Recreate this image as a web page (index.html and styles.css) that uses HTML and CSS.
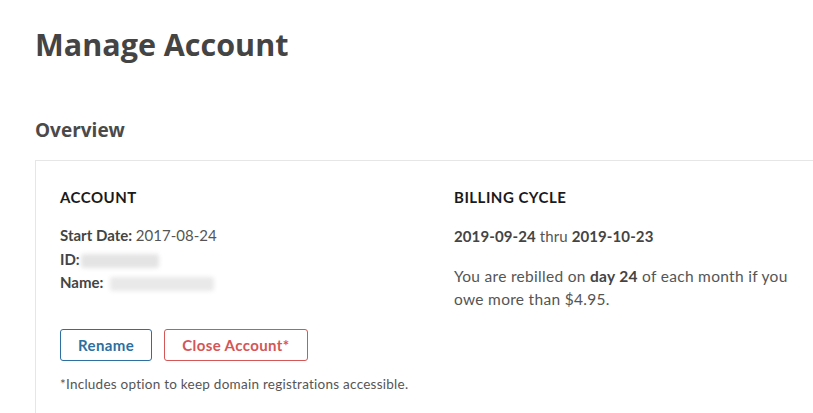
FILE: index.html
```html
<!DOCTYPE html>
<html lang="en">
<head>
  <meta charset="UTF-8">
  <title>Manage Account</title>
  <link rel="stylesheet" href="styles.css">
</head>
<body>
  <div class="page">
    <h1>Manage Account</h1>
    <h2>Overview</h2>

    <div class="card">
      <div class="col account">
        <h3>ACCOUNT</h3>
        <ul class="details">
          <li><strong>Start Date:</strong> 2017-08-24</li>
          <li><strong>ID:</strong> <span class="blur blur-id"></span></li>
          <li><strong>Name:</strong> <span class="blur blur-name"></span></li>
        </ul>
        <div class="actions">
          <button type="button" class="btn btn-blue">Rename</button>
          <button type="button" class="btn btn-red">Close Account*</button>
        </div>
        <p class="note">*Includes option to keep domain registrations accessible.</p>
      </div>

      <div class="col billing">
        <h3>BILLING CYCLE</h3>
        <p class="range"><strong>2019-09-24</strong> thru <strong>2019-10-23</strong></p>
        <p class="rebill">You are rebilled on <strong>day 24</strong> of each month if you owe more than $4.95.</p>
      </div>
    </div>
  </div>
</body>
</html>
```

FILE: styles.css
```css
body {
  margin: 0;
  padding: 0;
  background: #fff;
  font-family: Lato, "Open Sans", sans-serif;
  color: #555;
  overflow: hidden;
}

.page {
  padding: 23px 0 0 35px;
}

h1 {
  margin: 0;
  font-family: "Open Sans", sans-serif;
  font-size: 30.5px;
  font-weight: 700;
  color: #444;
}

h2 {
  margin: 52px 0 0;
  font-family: "Open Sans", sans-serif;
  font-size: 19px;
  font-weight: 700;
  color: #4a4a4a;
}

.card {
  display: flex;
  width: 820px;
  margin-top: 17px;
  padding: 27px 0 60px 24px;
  border: 1px solid #e6e6e6;
  background: #fff;
}

.col.account {
  width: 394px;
}

h3 {
  margin: 0 0 18px;
  font-size: 15px;
  font-weight: 700;
  color: #1a1a1a;
  letter-spacing: 0.5px;
}

.details {
  list-style: none;
  margin: 0;
  padding: 0;
  font-size: 15px;
  line-height: 23.5px;
}

strong {
  font-weight: 700;
  color: #444;
}

.blur {
  display: inline-block;
  vertical-align: middle;
  height: 14px;
  background: #e4e4e4;
  border-radius: 3px;
  filter: blur(2px);
}

.blur-id {
  width: 78px;
  margin-left: -3px;
}

.blur-name {
  width: 104px;
  margin-left: 3px;
  background: #e9e9e9;
}

.actions {
  display: flex;
  gap: 12px;
  margin-top: 34px;
}

.btn {
  height: 32px;
  padding: 0 17px;
  background: #fff;
  border-radius: 3px;
  font-family: Lato, sans-serif;
  font-size: 15px;
  font-weight: 700;
  letter-spacing: 0.4px;
  cursor: pointer;
}

.btn-blue {
  border: 1px solid #2c6fa0;
  color: #2c6fa0;
}

.btn-red {
  border: 1px solid #d45656;
  color: #d45656;
}

.note {
  margin: 15px 0 0;
  font-size: 13.5px;
  letter-spacing: 0.25px;
  color: #555;
}

.range {
  margin: 0;
  font-size: 15px;
  line-height: 24px;
  letter-spacing: 0.1px;
}

.rebill {
  margin: 17px 0 0;
  width: 350px;
  font-size: 15.5px;
  line-height: 23px;
  letter-spacing: 0.3px;
}
```
